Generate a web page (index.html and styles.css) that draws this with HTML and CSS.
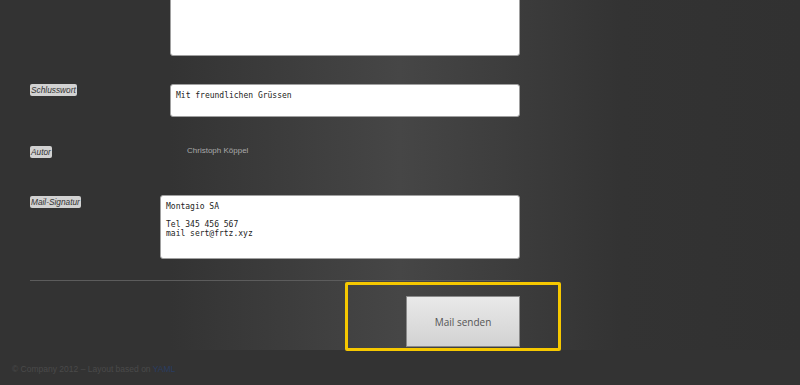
FILE: index.html
```html
<!DOCTYPE html>
<html lang="de">
<head>
  <meta charset="UTF-8" />
  <meta name="viewport" content="width=device-width, initial-scale=1.0"/>
  <title>Mail versenden</title>
  <link rel="stylesheet" href="styles.css">
</head>
<body>

  <div class="page">
    <form class="mailform" onsubmit="return false">

      <div class="row row-text">
        <label class="tag">Text</label>
        <textarea class="field field-big"></textarea>
      </div>

      <div class="row row-close">
        <label class="tag">Schlusswort</label>
        <textarea class="field field-small">Mit freundlichen Grüssen</textarea>
      </div>

      <div class="row row-author">
        <label class="tag">Autor</label>
        <span class="author">Christoph Köppel</span>
      </div>

      <div class="row row-sig">
        <label class="tag">Mail-Signatur</label>
        <textarea class="field field-sig">Montagio SA

Tel 345 456 567
mail sert@frtz.xyz</textarea>
      </div>

      <hr class="divider">

      <div class="actions">
        <button class="send">Mail senden</button>
        <div class="highlight"></div>
      </div>

    </form>
  </div>

  <footer class="footer">
    © Company 2012 – Layout based on <a href="#">YAML</a>
  </footer>

</body>
</html>
```

FILE: styles.css
```css
body {
  margin: 0;
  background: #333;
  font-family: "Liberation Sans", Arial, sans-serif;
  overflow: hidden;
}
.page {
  background: linear-gradient(to right, #333 0, #333 170px, #464646 400px, #333 620px, #313131 800px);
  margin-top: -44px;
  height: 394px;
}
.mailform {
  width: 490px;
  margin-left: 30px;
}
.row {
  display: flex;
  align-items: flex-start;
}
.tag {
  font-size: 8.3px;
  line-height: 10px;
  font-style: italic;
  color: #333;
  background: #d2d2d2;
  border-radius: 2px;
  padding: 1px 1px;
  margin-right: auto;
}
.row-text .tag {
  visibility: hidden;
}
.field {
  box-sizing: border-box;
  width: 350px;
  border: 1px solid #a0a0a0;
  border-radius: 3px;
  background: #fff;
  padding: 6px 5px;
  font-family: "DejaVu Sans Mono", monospace;
  font-size: 8px;
  line-height: 9px;
  color: #222;
  resize: none;
  outline: none;
}
.field-big {
  height: 100px;
}
.row-close {
  margin-top: 28px;
}
.field-small {
  height: 33px;
}
.row-author {
  margin-top: 29px;
}
.author {
  width: 333px;
  font-size: 8px;
  line-height: 10px;
  color: #aaa;
}
.row-sig {
  margin-top: 37px;
}
.row-sig .tag {
  margin-top: 1px;
}
.field-sig {
  width: 360px;
  height: 64px;
}
.divider {
  border: 0;
  border-top: 1px solid #5c5c5c;
  margin: 21px 0 0;
}
.actions {
  position: relative;
  display: flex;
  justify-content: flex-end;
  padding: 15px 0 4px;
}
.send {
  width: 114px;
  height: 51px;
  border: 1px solid #8a8a8a;
  background: linear-gradient(#e9e9e9, #d2d2d2);
  font-family: "Open Sans", sans-serif;
  font-size: 10px;
  color: #555;
}
.highlight {
  position: absolute;
  left: 315px;
  top: 1px;
  width: 216px;
  height: 69px;
  box-sizing: border-box;
  border: 3px solid #f6c800;
  border-radius: 2px;
}
.footer {
  padding: 13px 12px;
  font-size: 8.5px;
  line-height: 12px;
  color: #4a4a4a;
}
.footer a {
  color: #2a3d62;
  text-decoration: none;
}
```
